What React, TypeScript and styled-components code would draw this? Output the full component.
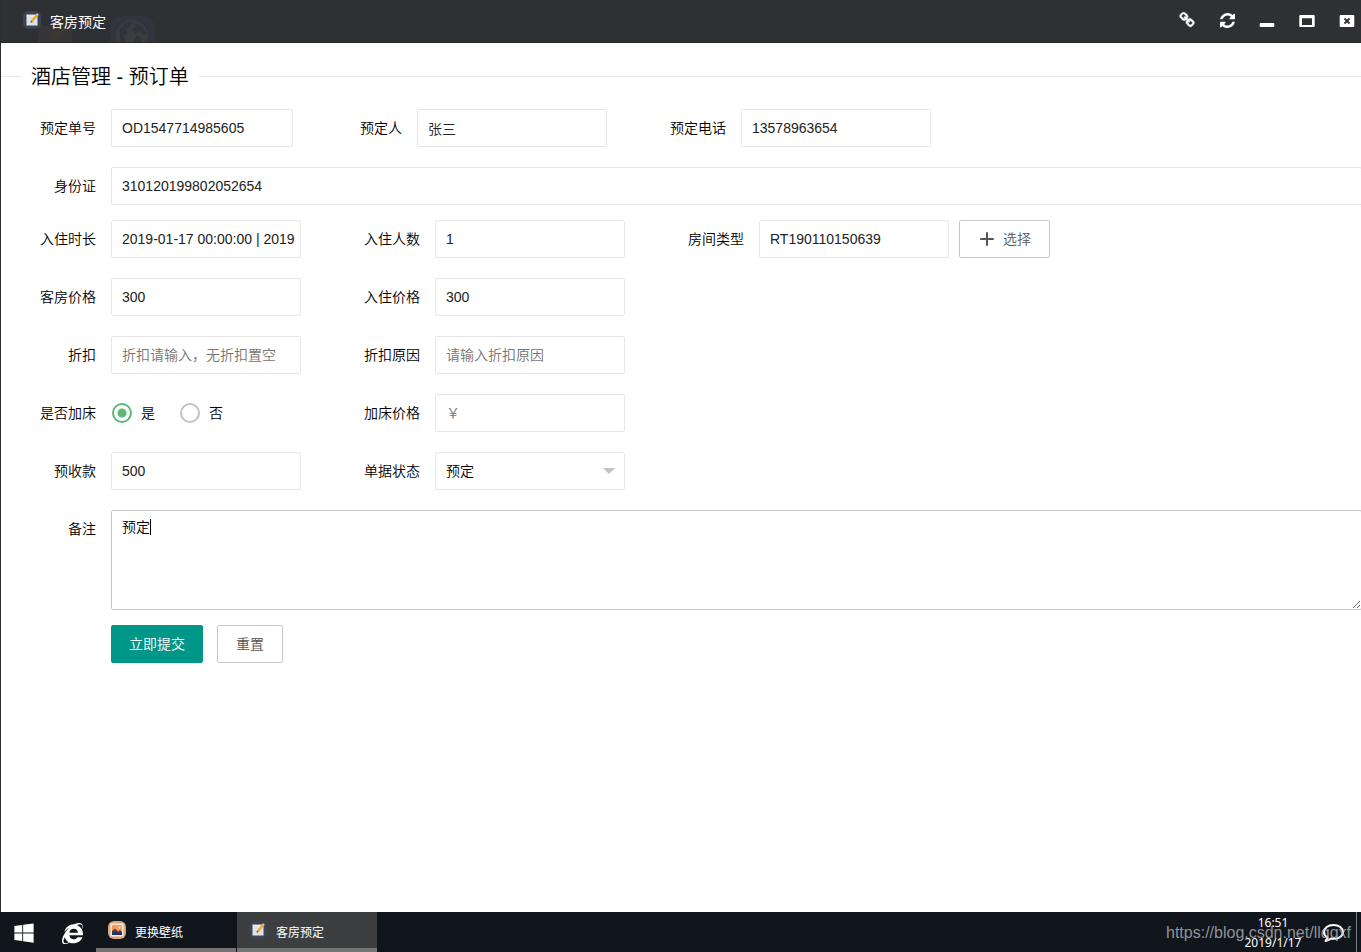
import React from "react";
import styled, { createGlobalStyle, css } from "styled-components";
import { FaInternetExplorer, FaWindows } from "react-icons/fa";

const GlobalStyle = createGlobalStyle`
  *, *::before, *::after { box-sizing: border-box; }
  body {
    margin: 0;
    background: #11161d;
    color: #000;
    font: 14px/20px "Liberation Sans", "Noto Sans CJK SC", sans-serif;
  }
  input, textarea, select, button { font: inherit; color: inherit; }
`;

const Desktop = styled.div`
  display: flex;
  flex-direction: column;
  min-height: 100vh;
  overflow: hidden;
`;

const Window = styled.main`
  flex: 1;
  display: flex;
  flex-direction: column;
  border-left: 1px solid #2c2d30;
  background: #fff;
`;

const TitleBar = styled.header`
  position: relative;
  display: flex;
  align-items: center;
  justify-content: space-between;
  height: 43px;
  padding: 0 6px 2px 22px;
  background: #2f3033;
  border-bottom: 1px solid #26272a;
  color: #fff;
  overflow: hidden;
`;

const Backdrop = styled.svg`
  position: absolute;
  left: 32px;
  top: 14px;
`;

const Title = styled.h1`
  position: relative;
  display: flex;
  align-items: center;
  gap: 9px;
  margin: 0;
  font-size: 14px;
  font-weight: 400;
`;

const TitleText = styled.span`
  padding-top: 4px;
`;

const WindowControls = styled.div`
  display: flex;
  gap: 24px;
`;

const ControlButton = styled.button`
  display: flex;
  align-items: center;
  justify-content: center;
  width: 16px;
  height: 16px;
  padding: 0;
  border: 0;
  background: none;
  color: #fff;
`;

const Form = styled.form`
  flex: 1;
  padding-top: 22px;
  font-weight: 350;
`;

const Group = styled.fieldset`
  min-width: 0;
  margin: 0;
  padding: 0 0 20px;
  border: 0;
  border-top: 1px solid #e6e6e6;
`;

const Legend = styled.legend`
  margin-left: 20px;
  padding: 1px 10px 0;
  font-size: 20px;
  font-weight: 350;
  line-height: 22px;
`;

const Rows = styled.div`
  display: flex;
  flex-direction: column;
  gap: 20px;
`;

const FormBody = styled(Rows)`
  padding-top: 21px;
`;

const Section = styled.div`
  display: flex;
  flex-direction: column;
  gap: 15px;
`;

const Row = styled.div`
  display: flex;
  align-items: flex-start;
  gap: 24px;
`;

const Field = styled.div<{ $grow?: boolean }>`
  display: flex;
  ${(p) => p.$grow && css`flex: 1; margin-right: -1px;`}
`;

const labelStyle = css<{ $narrow?: boolean }>`
  flex: none;
  width: ${(p) => (p.$narrow ? 100 : 110)}px;
  padding: 9px 15px 9px 0;
  text-align: right;
`;

const Label = styled.label<{ $narrow?: boolean }>`${labelStyle}`;
const GroupLabel = styled.span<{ $narrow?: boolean }>`${labelStyle}`;

const control = css`
  border: 1px solid #e6e6e6;
  border-radius: 2px;
  background: #fff;
  outline: 0;
`;

const Input = styled.input<{ $size?: "short" | "full" }>`
  ${control}
  width: ${(p) => (p.$size === "full" ? "100%" : p.$size === "short" ? "182px" : "190px")};
  height: 38px;
  padding: 0 0 0 10px;
  color: #222;
  &::placeholder { color: #757575; opacity: 1; }
`;

const SelectBox = styled.div`
  position: relative;
  width: 190px;
`;

const Select = styled.select`
  ${control}
  appearance: none;
  width: 100%;
  height: 38px;
  padding: 0 30px 0 10px;
`;

const Arrow = styled.svg`
  position: absolute;
  right: 10px;
  top: 16px;
  pointer-events: none;
`;

const NoteBox = styled.div`
  position: relative;
  flex: 1;
`;

const TextArea = styled.textarea`
  ${control}
  display: block;
  width: 100%;
  height: 100px;
  padding: 6px 10px;
  border-color: #c9c9c9;
  resize: vertical;
`;

const Caret = styled.span`
  position: absolute;
  left: 39px;
  top: 9px;
  width: 1px;
  height: 16px;
  background: #000;
`;

const RadioGroup = styled.div`
  display: flex;
  align-items: center;
  gap: 25px;
  width: 190px;
  height: 38px;
  padding-left: 1px;
`;

const RadioLabel = styled.label`
  display: flex;
  align-items: center;
  gap: 9px;
`;

const Radio = styled.input`
  appearance: none;
  width: 20px;
  height: 20px;
  margin: 0;
  border: 2px solid #c2c2c2;
  border-radius: 50%;
  &:checked {
    border-color: #5fb878;
    background: radial-gradient(circle, #5fb878 4px, #fff 5px);
  }
`;

const Button = styled.button<{ $primary?: boolean }>`
  display: flex;
  align-items: center;
  gap: 8px;
  height: 38px;
  padding: 0 ${(p) => (p.$primary ? 17 : 18)}px;
  border: 1px solid ${(p) => (p.$primary ? "#009688" : "#c9c9c9")};
  border-radius: 2px;
  background: ${(p) => (p.$primary ? "#009688" : "#fff")};
  color: ${(p) => (p.$primary ? "#fff" : "#555")};
`;

const Picker = styled.div`
  display: flex;
  gap: 10px;
`;

const Actions = styled.div`
  display: flex;
  gap: 14px;
  padding-left: 110px;
`;

const Taskbar = styled.footer`
  position: relative;
  display: flex;
  height: 40px;
  background: #11161d;
  color: #fff;
  font-size: 12px;
`;

const Launcher = styled.button`
  display: flex;
  align-items: center;
  justify-content: center;
  width: 48px;
  padding: 2px 0 0;
  border: 0;
  background: none;
  color: #fff;
`;

const Task = styled.button<{ $active?: boolean }>`
  display: flex;
  align-items: center;
  gap: 9px;
  width: 140px;
  margin-right: 1px;
  padding: 0 0 0 12px;
  border: 0;
  border-bottom: 4px solid #767374;
  background: ${(p) => (p.$active ? "#3d3e40" : "#11161d")};
  color: #fff;
`;

const TaskText = styled.span`
  padding-top: 5px;
`;

const Tray = styled.div`
  display: flex;
  margin-left: auto;
`;

const Clock = styled.time`
  width: 80px;
  padding-top: 1px;
  text-align: center;
  font-family: "Noto Sans", "Noto Sans CJK SC", sans-serif;
`;

const ChatButton = styled(Launcher)`
  width: 40px;
  margin-right: 3px;
`;

const ShowDesktop = styled.button`
  width: 5px;
  padding: 0;
  border: 0;
  border-left: 1px solid #7c7f83;
  background: none;
`;

const Watermark = styled.span`
  position: absolute;
  right: 10px;
  top: 11px;
  font-size: 16px;
  color: rgba(190, 190, 190, 0.75);
  pointer-events: none;
`;

const NoteIcon = () => (
  <svg width="18" height="18" viewBox="0 0 18 18" aria-hidden="true">
    <rect width="18" height="18" rx="6" fill="#394454" />
    <path d="M3.500 3.500h11v11h-11z" fill="#e9e9ec" />
    <path d="M4.500 7h9M4.500 9h9M4.500 11h9M4.500 13h9" stroke="#c3c6cb" strokeWidth=".5" />
    <path d="M3.500 3.500h9" stroke="#8b8f9a" strokeWidth="1" />
    <path d="M8 9.500l5.200-6.200 1.800 1.400L9.800 11z" fill="#f5a81c" />
    <path d="M13.200 3.300l.8-1 1.800 1.400-.8 1z" fill="#f5d29b" />
    <path d="M8 9.500l1.800 1.500-2.300.8z" fill="#444" />
  </svg>
);

const WallpaperIcon = () => (
  <svg width="18" height="18" viewBox="0 0 18 18" aria-hidden="true">
    <rect width="18" height="18" rx="6" fill="#d8a67b" />
    <path d="M2.500 2.500h13v13h-13z" fill="#f5e7df" />
    <path d="M4 4h10v10H4z" fill="#f69a55" />
    <circle cx="11.500" cy="6.500" r="1.300" fill="#ffe07a" />
    <path d="M4 10l3-2.500 3 3 2-1.500 2 2v3H4z" fill="#4d3a61" />
    <path d="M4 12l3-1 4 1 3-1v3H4z" fill="#22335a" />
  </svg>
);

const App = () => (
  <>
    <GlobalStyle />
    <Desktop>
      <Window>
        <TitleBar>
          <Backdrop width="130" height="30" viewBox="0 0 130 30" aria-hidden="true">
            <path d="M5 12h34v18H5z" fill="#373637" />
            <path d="M18 24l10-11 6 2-12 11z" fill="#3e382e" />
            <rect x="77" y="2" width="45" height="40" rx="13" fill="#30353e" />
            <circle cx="99" cy="22" r="16" fill="#3b3c3e" />
            <path d="M86 16l6-7 7-1-2 5-4 2 1 4-4 3 3 5-5 1zM102 9l7 3 5 8-4 1-3-4-5 2-3-4 4-2zM103 22l6 2-2 6h-6z" fill="#2f333a" />
          </Backdrop>
          <Title>
            <NoteIcon />
            <TitleText>客房预定</TitleText>
          </Title>
          <WindowControls>
            <ControlButton type="button" aria-label="link">
              <svg width="16" height="16" viewBox="0 0 1792 1792" fill="currentColor" stroke="currentColor" strokeWidth="70">
                <path d="M1520 1216q0-40-28-68l-208-208q-28-28-68-28-42 0-72 32 3 3 19 18.500t21.500 21.500 15 19 13 25.500 3.500 27.500q0 40-28 68t-68 28q-15 0-27.500-3.500t-25.500-13-19-15-21.500-21.500-18.500-19q-33 31-33 73 0 40 28 68l206 207q27 27 68 27 40 0 68-26l147-146q28-28 28-67zm-703-705q0-40-28-68l-206-207q-28-28-68-28-39 0-68 27l-147 146q-28 28-28 67 0 40 28 68l208 208q27 27 68 27 42 0 72-31-3-3-19-18.500t-21.500-21.500-15-19-13-25.500-3.500-27.500q0-40 28-68t68-28q15 0 27.500 3.500t25.500 13 19 15 21.500 21.500 18.500 19q33-31 33-73zm895 705q0 120-85 203l-147 146q-83 83-203 83-121 0-204-85l-206-207q-83-83-83-203 0-123 88-209l-88-88q-86 88-208 88-120 0-204-84l-208-208q-84-84-84-204t85-203l147-146q83-83 203-83 121 0 204 85l206 207q83 83 83 203 0 123-88 209l88 88q86-88 208-88 120 0 204 84l208 208q84 84 84 204z" />
              </svg>
            </ControlButton>
            <ControlButton type="button" aria-label="refresh">
              <svg width="15" height="15" viewBox="0 128 1536 1536" fill="currentColor">
                <path d="M1511 1056q0 5-1 7-64 268-268 434.500t-478 166.500q-146 0-282.500-55t-243.500-157l-129 129q-19 19-45 19t-45-19-19-45v-448q0-26 19-45t45-19h448q26 0 45 19t19 45-19 45l-137 137q71 66 161 102t187 36q134 0 250-65t186-179q11-17 53-117 8-23 30-23h192q13 0 22.500 9.500t9.500 22.500zm25-800v448q0 26-19 45t-45 19h-448q-26 0-45-19t-19-45 19-45l138-138q-148-137-349-137-134 0-250 65t-186 179q-11 17-53 117-8 23-30 23h-199q-13 0-22.500-9.500t-9.500-22.500v-7q65-268 270-434.500t480-166.500q146 0 284 55.500t245 156.500l130-129q19-19 45-19t45 19 19 45z" />
              </svg>
            </ControlButton>
            <ControlButton type="button" aria-label="minimize">
              <svg width="16" height="16" viewBox="0 0 16 16">
                <rect x=".7" y="11" width="14.600" height="4" rx="1" fill="currentColor" />
              </svg>
            </ControlButton>
            <ControlButton type="button" aria-label="maximize">
              <svg width="16" height="16" viewBox="0 0 16 16" fill="currentColor">
                <path fillRule="evenodd" d="M1.300 3h13.400q1 0 1 1v10q0 1-1 1H1.300q-1 0-1-1V4q0-1 1-1zM3 6.300V13h10V6.300z" />
              </svg>
            </ControlButton>
            <ControlButton type="button" aria-label="close">
              <svg width="16" height="16" viewBox="0 0 16 16">
                <rect x=".7" y="3" width="14.600" height="12" rx="1" fill="currentColor" />
                <path d="M5.500 6.500l5 5M10.500 6.500l-5 5" stroke="#2f3033" strokeWidth="1.800" />
              </svg>
            </ControlButton>
          </WindowControls>
        </TitleBar>

        <Form onSubmit={(e) => e.preventDefault()}>
          <Group>
            <Legend>酒店管理 - 预订单</Legend>
            <FormBody>
              <Row>
                <Field>
                  <Label htmlFor="orderNo">预定单号</Label>
                  <Input id="orderNo" $size="short" defaultValue="OD1547714985605" />
                </Field>
                <Field>
                  <Label htmlFor="guest" $narrow>预定人</Label>
                  <Input id="guest" defaultValue="张三" />
                </Field>
                <Field>
                  <Label htmlFor="phone">预定电话</Label>
                  <Input id="phone" defaultValue="13578963654" />
                </Field>
              </Row>
              <Section>
                <Row>
                  <Field $grow>
                    <Label htmlFor="idCard">身份证</Label>
                    <Input id="idCard" $size="full" defaultValue="310120199802052654" />
                  </Field>
                </Row>
                <Row>
                  <Field>
                    <Label htmlFor="period">入住时长</Label>
                    <Input id="period" defaultValue="2019-01-17 00:00:00 | 2019" />
                  </Field>
                  <Field>
                    <Label htmlFor="people">入住人数</Label>
                    <Input id="people" defaultValue="1" />
                  </Field>
                  <Field>
                    <Label htmlFor="roomType">房间类型</Label>
                    <Picker>
                      <Input id="roomType" defaultValue="RT190110150639" />
                      <Button type="button">
                        <svg width="17" height="16" viewBox="0 0 17 16" aria-hidden="true">
                          <path d="M9 2v12M3 8h12" stroke="#555" strokeWidth="2" strokeLinecap="round" />
                        </svg>
                        选择
                      </Button>
                    </Picker>
                  </Field>
                </Row>
              </Section>
              <Row>
                <Field>
                  <Label htmlFor="roomPrice">客房价格</Label>
                  <Input id="roomPrice" defaultValue="300" />
                </Field>
                <Field>
                  <Label htmlFor="stayPrice">入住价格</Label>
                  <Input id="stayPrice" defaultValue="300" />
                </Field>
              </Row>
              <Row>
                <Field>
                  <Label htmlFor="discount">折扣</Label>
                  <Input id="discount" placeholder="折扣请输入，无折扣置空" />
                </Field>
                <Field>
                  <Label htmlFor="reason">折扣原因</Label>
                  <Input id="reason" placeholder="请输入折扣原因" />
                </Field>
              </Row>
              <Row>
                <Field role="radiogroup" aria-labelledby="extraBed">
                  <GroupLabel id="extraBed">是否加床</GroupLabel>
                  <RadioGroup>
                    <RadioLabel>
                      <Radio type="radio" name="bed" defaultChecked />是
                    </RadioLabel>
                    <RadioLabel>
                      <Radio type="radio" name="bed" />否
                    </RadioLabel>
                  </RadioGroup>
                </Field>
                <Field>
                  <Label htmlFor="bedPrice">加床价格</Label>
                  <Input id="bedPrice" placeholder="￥" />
                </Field>
              </Row>
              <Row>
                <Field>
                  <Label htmlFor="deposit">预收款</Label>
                  <Input id="deposit" defaultValue="500" />
                </Field>
                <Field>
                  <Label htmlFor="status">单据状态</Label>
                  <SelectBox>
                    <Select id="status">
                      <option>预定</option>
                    </Select>
                    <Arrow width="12" height="6" viewBox="0 0 12 6" aria-hidden="true">
                      <path d="M0 0h12L6 6z" fill="#c2c2c2" />
                    </Arrow>
                  </SelectBox>
                </Field>
              </Row>
              <Section>
                <Row>
                  <Field $grow>
                    <Label htmlFor="note">备注</Label>
                    <NoteBox>
                      <TextArea id="note" defaultValue="预定" />
                      <Caret />
                    </NoteBox>
                  </Field>
                </Row>
                <Actions>
                  <Button type="submit" $primary>立即提交</Button>
                  <Button type="reset">重置</Button>
                </Actions>
              </Section>
            </FormBody>
          </Group>
        </Form>
      </Window>

      <Taskbar>
        <Launcher type="button" aria-label="start"><FaWindows size={22} /></Launcher>
        <Launcher type="button" aria-label="browser"><FaInternetExplorer size={21} /></Launcher>
        <Task type="button"><WallpaperIcon /><TaskText>更换壁纸</TaskText></Task>
        <Task type="button" $active><NoteIcon /><TaskText>客房预定</TaskText></Task>
        <Tray>
          <Clock>16:51<br />2019/1/17</Clock>
          <ChatButton type="button" aria-label="messages">
            <svg width="22" height="20" viewBox="0 0 22 20" fill="none" stroke="currentColor" strokeWidth="2" strokeLinejoin="round">
              <path d="M11.500 2C6 2 2 5 2 9c0 2.500 1.500 4.300 3.500 5.500-.2 1.500-1 2.500-2 3.500 2.500-.3 4.200-1.300 5.500-2.500 7 1 12-2 12-6.500 0-4-4-7-9.500-7z" />
            </svg>
          </ChatButton>
          <ShowDesktop type="button" aria-label="desktop" />
        </Tray>
        <Watermark>https://blog.csdn.net/llqqxf</Watermark>
      </Taskbar>
    </Desktop>
  </>
);

export default App;
